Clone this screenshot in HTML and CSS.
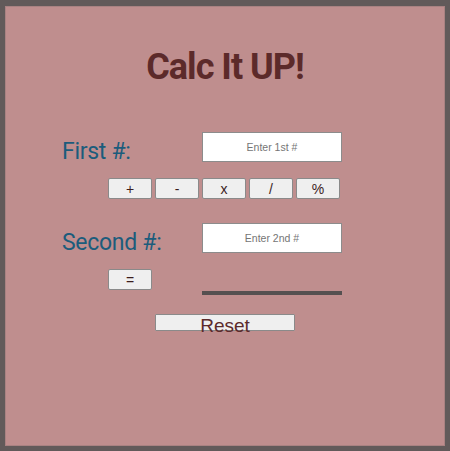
FILE: index.html
```html
<!DOCTYPE html>
<html>
<head>
<meta charset="utf-8">
<link rel="stylesheet" href="styles.css">
</head>
<body>
<div class="calc">
  <h1 class="title">Calc It UP!</h1>
  <div class="row">
    <label class="label">First #:</label>
    <input class="field" type="text" placeholder="Enter 1st #">
  </div>
  <div class="ops">
    <button class="btn">+</button>
    <button class="btn">-</button>
    <button class="btn">x</button>
    <button class="btn">/</button>
    <button class="btn">%</button>
  </div>
  <div class="row row-second">
    <label class="label">Second #:</label>
    <input class="field" type="text" placeholder="Enter 2nd #">
  </div>
  <div class="eq-row">
    <button class="btn btn-eq">=</button>
    <div class="result"></div>
  </div>
  <button class="reset">Reset</button>
</div>
</body>
</html>
```

FILE: styles.css
```css
html, body {
  margin: 0;
  padding: 0;
}
body {
  background: #625a5a;
  padding: 6px 5px 5px 5px;
}
.calc {
  box-sizing: border-box;
  width: 440px;
  height: 440px;
  background: #bf8e8e;
  border: 1px solid #a98282;
  padding-top: 40px;
  display: flex;
  flex-direction: column;
  align-items: flex-start;
}
.title {
  align-self: stretch;
  margin: 0;
  text-align: center;
  font-family: Roboto, sans-serif;
  font-weight: 700;
  font-size: 36px;
  line-height: 40px;
  letter-spacing: -1px;
  color: #5c2a2a;
}
.row {
  display: flex;
  align-items: flex-start;
  padding-left: 56px;
  margin-top: 45px;
  height: 30px;
}
.row-second {
  margin-top: 24px;
}
.label {
  box-sizing: border-box;
  width: 140px;
  height: 30px;
  padding-top: 5px;
  font-family: Roboto, sans-serif;
  font-weight: 400;
  font-size: 23px;
  line-height: 30px;
  letter-spacing: -0.3px;
  color: #1b5c7c;
  white-space: nowrap;
}
.field {
  box-sizing: border-box;
  width: 140px;
  height: 30px;
  margin: 0;
  border: 1px solid #8c8c8c;
  background: #ffffff;
  text-align: center;
  font-family: "Liberation Sans", Arial, sans-serif;
  font-size: 10.5px;
  padding: 0;
}
.field::placeholder {
  color: #757575;
}
.ops {
  display: flex;
  gap: 3px;
  padding-left: 102px;
  margin-top: 16px;
}
.btn {
  box-sizing: border-box;
  width: 44px;
  height: 21px;
  margin: 0;
  padding: 0;
  background: #efefef;
  border: 1px solid #8a8a8a;
  border-radius: 2px;
  font-family: "Liberation Sans", Arial, sans-serif;
  font-size: 14px;
  color: #3b1d1d;
}
.eq-row {
  display: flex;
  padding-left: 102px;
  margin-top: 16px;
  height: 26px;
}
.btn-eq {
  align-self: flex-start;
}
.result {
  align-self: flex-end;
  margin-left: 50px;
  width: 140px;
  height: 4px;
  background: #555050;
}
.reset {
  box-sizing: border-box;
  margin: 19px 0 0 149px;
  width: 140px;
  height: 17px;
  padding: 2px 0 0 0;
  background: #efefef;
  border: 1px solid #8a8a8a;
  border-radius: 1px;
  font-family: "Liberation Sans", Arial, sans-serif;
  font-size: 19px;
  line-height: 17px;
  color: #5c2a2a;
  overflow: visible;
}
```
